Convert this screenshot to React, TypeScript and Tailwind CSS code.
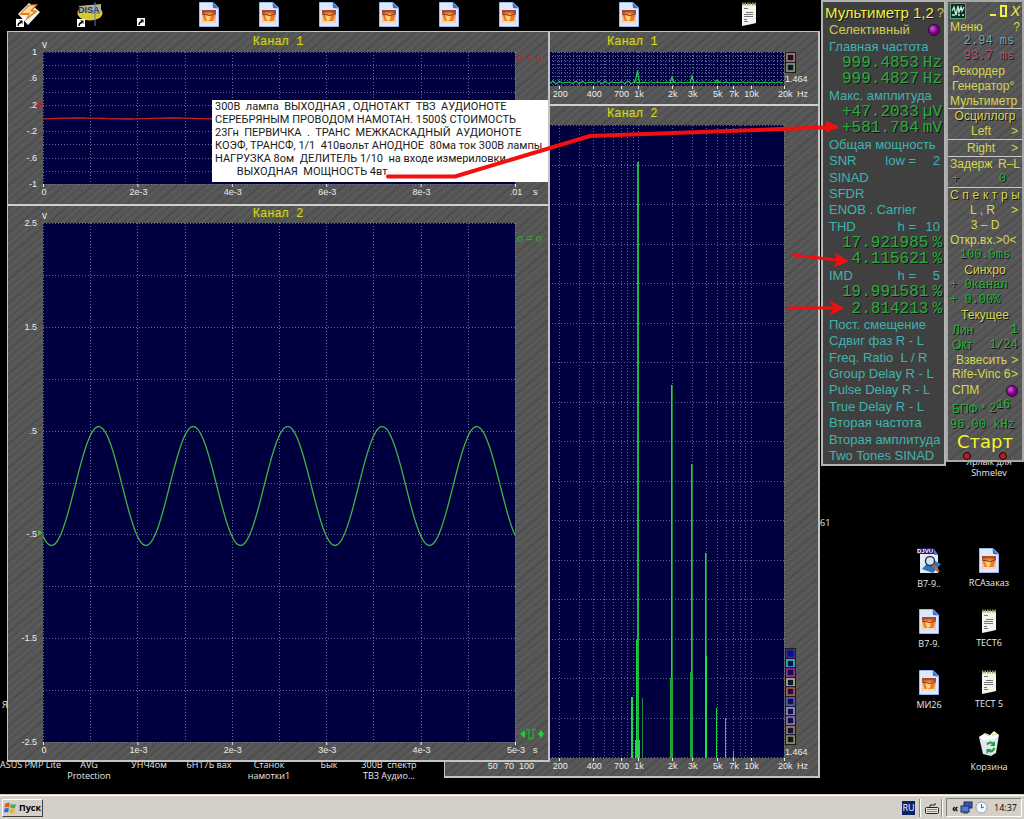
import React from "react";

const SANS = "font-['Liberation_Sans',Arial,sans-serif]";
const HATCH =
  "bg-[#565656] bg-[repeating-linear-gradient(140deg,#5c5c5c_0px,#575757_2px,#4f4f4f_4px,#5a5a5a_5px,#555555_9px,#4a4a4a_10px,#595959_12px,#565656_15px,#4e4e4e_16px,#5b5b5b_18px)]";

/* ---------- helpers for drawing plots ---------- */

const range = (n: number) => Array.from({ length: n }, (_, i) => i);

function PlotTitle({ children }: { children: string }) {
  return (
    <span className="block font-['Liberation_Mono','Courier_New',monospace] text-[12px] leading-4 text-[#d8d820] [text-shadow:1px_0_0_#77771a]">
      {children}
    </span>
  );
}

type ScopeProps = {
  height: number;
  bottom: number;
  yLabels: string[];
  xLabels: string[];
  trace: string;
  traceColor: string;
  markerY: number;
  children?: React.ReactNode;
};

function ScopePlot({ height, bottom, yLabels, xLabels, trace, traceColor, markerY, children }: ScopeProps) {
  const top = bottom - height;
  const left = 35;
  const w = 472;
  const stepY = height / 10;
  const stepX = w / 10;
  return (
    <svg
      className={`block ${SANS}`}
      width="540"
      height={bottom + 18}
      viewBox={`0 0 540 ${bottom + 18}`}
      fontSize="9"
      fill="#ececec"
    >
      <rect x={left} y={top} width={w} height={height} fill="#000040" />
      <g stroke="#7d84a8" strokeWidth="1" strokeDasharray="1 2" opacity="0.8" shapeRendering="crispEdges">
        {range(11).map((i) => (
          <line key={"h" + i} x1={left} x2={left + w} y1={Math.round(top + i * stepY) + 0.5} y2={Math.round(top + i * stepY) + 0.5} />
        ))}
        {range(11).map((i) => (
          <line key={"v" + i} y1={top} y2={bottom} x1={Math.round(left + i * stepX) + 0.5} x2={Math.round(left + i * stepX) + 0.5} />
        ))}
      </g>
      <path d={trace} fill="none" stroke={traceColor} strokeWidth="1.3" />
      <text x="34" y={top - 4} fontSize="10">v</text>
      {yLabels.map((t, i) => (
        <text key={t} x="29" y={top + (i * height) / 5 + 3} textAnchor="end">
          {t}
        </text>
      ))}
      {xLabels.map((t, i) => (
        <g key={t}>
          <rect x={left + (i * w) / 5} y={bottom} width="1" height="3" />
          <text x={left + 1 + (i * w) / 5} y={bottom + 11} textAnchor="middle">
            {t}
          </text>
        </g>
      ))}
      <text x="525" y={bottom + 11}>s</text>
      <path d={`M30 ${markerY - 3}l5 3l-5 3z`} fill={traceColor} />
      {children}
    </svg>
  );
}

const sine = (() => {
  let d = "";
  for (let x = 35; x <= 507; x += 2) {
    const y = 280 - 59.5 * Math.cos((2 * Math.PI * (x - 90.7)) / 94.5);
    d += (d ? "L" : "M") + x + " " + y.toFixed(1);
  }
  return d;
})();

const flat = (() => {
  let d = "";
  for (let x = 35; x <= 507; x += 4) {
    const y = 86.5 + 0.5 * Math.sin(x / 15);
    d += (d ? "L" : "M") + x + " " + y.toFixed(1);
  }
  return d;
})();

/* ---------- spectrum ---------- */

const fx = (f: number) => 193 + 112.5 * Math.log10(f / 1000);
const FREQ_LINES = [
  50, 60, 70, 80, 90, 100, 200, 300, 400, 500, 600, 700, 800, 900, 1000, 2000, 3000, 4000, 5000, 6000, 7000, 8000,
  9000, 10000, 20000,
];
const FREQ_LABELS: [number, string][] = [
  [50, "50"],
  [70, "70"],
  [100, "100"],
  [200, "200"],
  [400, "400"],
  [700, "700"],
  [1000, "1k"],
  [2000, "2k"],
  [3000, "3k"],
  [5000, "5k"],
  [7000, "7k"],
  [10000, "10k"],
  [20000, "20k"],
];

function FreqAxis({ y }: { y: number }) {
  return (
    <g>
      {FREQ_LABELS.map(([f, t]) => (
        <g key={t}>
          <rect x={Math.round(fx(f))} y={y} width="1" height="3" />
          <text x={fx(f) + 1} y={y + 11} textAnchor="middle">
            {t}
          </text>
        </g>
      ))}
      <text x="352" y={y + 11}>Hz</text>
    </g>
  );
}

const noise = (() => {
  let d = "M0 31";
  for (let x = 2; x <= 339; x += 2) {
    const amp = x < 200 ? 1.6 : 0.7;
    const y = 30.5 + amp * Math.sin(x * 1.7) * Math.cos(x * 0.61);
    d += "L" + x + " " + y.toFixed(1);
  }
  return d;
})();

function Swatch({ y, c, fill }: { y: number; c: string; fill?: string }) {
  return (
    <g>
      <rect x="340.5" y={y - 0.5} width="10" height="10" fill="none" stroke="#1c1c1c" />
      <rect x="342" y={y + 1} width="7" height="7" fill={fill || "#10104a"} stroke={c} strokeWidth="1.4" />
    </g>
  );
}

const SWATCHES = ["#2020b0", "#35c8d8", "#b020b0", "#c8c860", "#c86040", "#5060d8", "#a0a0e0", "#a878d0", "#b09050", "#a0a048"];

function SpectrumWindow() {
  return (
    <section
      aria-label="Spectrum"
      className={`absolute left-[444px] top-[31px] w-[376px] border border-b-2 border-r-2 border-[#c4c4c4] ${HATCH}`}
    >
      <div className="border-b-2 border-[#d0d0d0]">
        <div className="h-5 pl-[162px] pt-0.5">
          <PlotTitle>Канал 1</PlotTitle>
        </div>
        <svg className={`block ${SANS}`} width="373" height="52" viewBox="0 0 373 52" fontSize="9" fill="#ececec">
          <rect x="8" y="0" width="331" height="34" fill="#000040" />
          <g stroke="#8890c0" strokeDasharray="1 2" opacity="0.65" shapeRendering="crispEdges">
            {range(9).map((i) => (
              <line key={i} x1="8" x2="339" y1={i * 4 + 0.5} y2={i * 4 + 0.5} />
            ))}
            {range(60).map((i) => (
              <line key={"a" + i} x1={104.5 + i * 4} x2={104.5 + i * 4} y1="0" y2="34" />
            ))}
            {FREQ_LINES.map((f) => (
              <line key={"v" + f} x1={Math.round(fx(f)) + 0.5} x2={Math.round(fx(f)) + 0.5} y1="0" y2="34" />
            ))}
          </g>
          <path d={noise} fill="none" stroke="#22c04a" strokeWidth="1.2" />
          <path
            d="M189 31L191 26L192.500 19L194 28L195 31M225 31L227 25L229 31M245 31L247 24L249 31M270 30L272 28L274 30"
            fill="none"
            stroke="#22d050"
            strokeWidth="1.2"
          />
          <FreqAxis y={34} />
          <Swatch y={1} c="#c08060" />
          <Swatch y={11} c="#90a860" />
          <text x="340" y="30">1.464</text>
        </svg>
      </div>
      <div>
        <div className="h-[19px] pl-[162px]">
          <PlotTitle>Канал 2</PlotTitle>
        </div>
        <svg className={`block ${SANS}`} width="373" height="651" viewBox="0 0 373 651" fontSize="9" fill="#ececec">
          <rect x="8" y="0" width="331" height="633" fill="#000040" />
          <g stroke="#7d84a8" strokeDasharray="1 2" opacity="0.75" shapeRendering="crispEdges">
            {range(17).map((i) => (
              <line key={i} x1="8" x2="339" y1={Math.round(i * 39.5) + 0.5} y2={Math.round(i * 39.5) + 0.5} />
            ))}
            {FREQ_LINES.map((f) => (
              <line key={"v" + f} x1={Math.round(fx(f)) + 0.5} x2={Math.round(fx(f)) + 0.5} y1="0" y2="633" />
            ))}
          </g>
          <g fill="#22d444" shapeRendering="crispEdges">
            <rect x="192" y="37" width="2" height="596" fill="#1cb844" />
            <rect x="191" y="515" width="1" height="118" />
            <rect x="186" y="572" width="2" height="61" />
            <rect x="197" y="573" width="1" height="60" fill="#168a3a" />
            <rect x="190" y="615" width="5" height="18" />
            <rect x="226" y="260" width="1" height="373" />
            <rect x="227" y="260" width="1" height="373" fill="#128a38" />
            <rect x="225" y="553" width="3" height="80" fill="#18a83a" />
            <rect x="246" y="339" width="1" height="294" />
            <rect x="247" y="339" width="1" height="294" fill="#128a38" />
            <rect x="245" y="547" width="3" height="86" fill="#18a83a" />
            <rect x="260" y="428" width="1" height="205" />
            <rect x="261" y="428" width="1" height="205" fill="#128a38" />
            <rect x="260" y="531" width="2" height="102" fill="#10e838" />
            <rect x="271" y="583" width="1" height="50" />
            <rect x="280" y="593" width="1" height="40" />
            <rect x="288" y="626" width="1" height="7" />
          </g>
          <FreqAxis y={633} />
          {SWATCHES.map((c, i) => (
            <Swatch key={c} y={524 + Math.round(i * 9.6)} c={c} fill={i === 0 ? "#101080" : undefined} />
          ))}
          <text x="340" y="630">1.464</text>
        </svg>
      </div>
    </section>
  );
}

function ScopeWindow() {
  return (
    <section
      aria-label="Oscilloscope"
      className={`absolute left-[7px] top-[31px] w-[543px] border border-b-2 border-r-2 border-[#c4c4c4] ${HATCH}`}
    >
      <div className="relative h-[172px]">
        <div className="absolute inset-x-0 top-0.5 text-center">
          <PlotTitle>Канал 1</PlotTitle>
        </div>
        <ScopePlot
          height={132}
          bottom={152}
          yLabels={["1", ".6", ".2", "-.2", "-.6", "-1"]}
          xLabels={["0", "2e-3", "4e-3", "6e-3", "8e-3", ".01"]}
          trace={flat}
          traceColor="#d01828"
          markerY={73}
        >
          <text x="509" y="29" fontSize="11" fill="#b82828">o &lt; o</text>
        </ScopePlot>
      </div>
      <div className="relative border-t-2 border-[#d0d0d0]">
        <div className="absolute inset-x-0 top-0 text-center">
          <PlotTitle>Канал 2</PlotTitle>
        </div>
        <ScopePlot
          height={519}
          bottom={536}
          yLabels={["2.5", "1.5", ".5", "-.5", "-1.5", "-2.5"]}
          xLabels={["0", "1e-3", "2e-3", "3e-3", "4e-3", "5e-3"]}
          trace={sine}
          traceColor="#3fb53f"
          markerY={327}
        >
          <text x="509" y="36" fontSize="11" fill="#28b028">o = o</text>
          <g fill="#20d030">
            <path d="M512 528l5-4v8z" />
            <path d="M533 524l3 4l-3 4l-3-4z" />
            <path d="M518 523.500h3v9h4v-9h3" fill="none" stroke="#20b030" strokeWidth="1.3" />
          </g>
        </ScopePlot>
      </div>
    </section>
  );
}

/* ---------- multimeter ---------- */

const SHADOW = "[text-shadow:1px_1px_0_#151515]";
const MONO = "font-['Liberation_Mono','Courier_New',monospace]";

function Item({ children }: { children: React.ReactNode }) {
  return (
    <button type="button" className="flex w-full flex-1 items-center whitespace-pre pl-1.5 text-left text-[13px] leading-4 text-[#3fb4ae]">
      {children}
    </button>
  );
}

function Value({ n, unit }: { n: string; unit: string }) {
  return (
    <div className={`flex flex-1 items-center justify-end gap-1 pr-0.5 text-[16px] leading-4 text-[#2cab3c] ${MONO}`}>
      <span>{n}</span>
      <span>{unit}</span>
    </div>
  );
}

function Param({ name, label, value }: { name: string; label: string; value: string }) {
  return (
    <Item>
      <span className="flex-1">{name}</span>
      <span>{label}</span>
      <span className="w-7 pr-1 text-right">{value}</span>
    </Item>
  );
}

function Led() {
  return <span className="size-3 shrink-0 rounded-full border border-[#2a0830] bg-[radial-gradient(circle_at_35%_35%,#d060d8,#800088_50%,#500058)]" />;
}

function Multimeter() {
  return (
    <section
      aria-label="Мультиметр"
      className={`flex h-[466px] w-[125px] flex-col border-2 border-[#b4b4b4] bg-[#404040] ${SANS} ${SHADOW}`}
    >
      <h1 className="flex h-5 items-end justify-between whitespace-nowrap pl-0.5 text-[15px] leading-[18px] text-[#f0f040]">
        Мультиметр 1,2<button type="button" className="text-[13px] text-[#c8c860]">?</button>
      </h1>
      <button type="button" className="flex flex-1 items-center justify-between pl-1.5 pr-1 text-[13px] leading-4 text-[#cccc58]">
        Селективный <Led />
      </button>
      <Item>Главная частота</Item>
      <Value n="999.4853" unit="Hz" />
      <Value n="999.4827" unit="Hz" />
      <Item>Макс. амплитуда</Item>
      <Value n="+47.2033" unit="µV" />
      <Value n="+581.784" unit="mV" />
      <Item>Общая мощность</Item>
      <Param name="SNR" label="low =" value="2" />
      <Item>SINAD</Item>
      <Item>SFDR</Item>
      <Item>ENOB . Carrier</Item>
      <Param name="THD" label="h =" value="10" />
      <Value n="17.921985" unit="%" />
      <Value n="4.115621" unit="%" />
      <Param name="IMD" label="h =" value="5" />
      <Value n="19.991581" unit="%" />
      <Value n="2.814213" unit="%" />
      <Item>Пост. смещение</Item>
      <Item>Сдвиг фаз R - L</Item>
      <Item>{"Freq. Ratio  L / R"}</Item>
      <Item>Group Delay R - L</Item>
      <Item>Pulse Delay R - L</Item>
      <Item>True Delay R - L</Item>
      <Item>Вторая частота</Item>
      <Item>Вторая амплитуда</Item>
      <Item>Two Tones SINAD</Item>
    </section>
  );
}

/* ---------- control panel ---------- */

const ROW = "flex h-[15px] w-full items-center whitespace-pre px-1 text-[12px] leading-[15px]";
const YEL = "text-[#d6d650]";
const GRN = "text-[#22b03a]";
const LINE = "border-b border-[#c8c8c8]";

function ControlPanel() {
  return (
    <section
      aria-label="Панель управления"
      className={`flex h-[462px] w-[78px] flex-col border-2 border-[#a8a8a8] ${HATCH} ${SANS} ${SHADOW}`}
    >
      <header className="flex h-[18px] items-center pl-0.5">
        <svg width="16" height="16" viewBox="0 0 16 16" aria-hidden="true">
          <rect x="0.5" y="0.5" width="15" height="15" fill="#0c3020" stroke="#58a078" />
          <path d="M2 8l2-4l2 8l2-9l1 6l2-5l1 4l2-4M2 12h3m3 0h2m2 0h2" fill="none" stroke="#c8f0d8" strokeWidth="1.3" />
        </svg>
        <div className={`ml-auto flex items-center gap-1 pr-0.5 ${YEL}`}>
          <button type="button" aria-label="Свернуть" className="h-2.5 w-1.5 border-b-2 border-[#f0f040]" />
          <button type="button" aria-label="Развернуть" className="h-3 w-[7px] border-2 border-[#f0f040]" />
          <button type="button" aria-label="Закрыть" className="text-[14px] italic leading-[14px] text-[#f0f040]">
            X
          </button>
        </div>
      </header>
      <div className={`${ROW} -mb-px justify-between ${YEL} !px-0.5`}>
        <button type="button">Меню</button>
        <button type="button">?</button>
      </div>
      <div className={`${ROW} ${MONO} justify-center pl-3 text-[#68a8b8]`}>2.94 ms</div>
      <div className={`${ROW} ${MONO} justify-center pl-3 text-[#b85868]`}>93.7 ms</div>
      <button type="button" className={`${ROW} ${YEL}`}>Рекордер</button>
      <button type="button" className={`${ROW} ${YEL}`}>Генератор°</button>
      <button type="button" className={`${ROW} ${YEL} ${LINE} !px-0.5`}>Мультиметр</button>
      <div className={`${ROW} ${YEL} justify-center`}>Осциллогр</div>
      <button type="button" className={`${ROW} ${YEL} ${LINE} !h-4 justify-end gap-5`}>
        <span>Left</span>
        <span>&gt;</span>
      </button>
      <button type="button" className={`${ROW} ${YEL} ${LINE} !h-[17px] justify-end gap-4`}>
        <span>Right</span>
        <span>&gt;</span>
      </button>
      <button type="button" className={`${ROW} ${YEL} justify-between !px-0.5`}>
        <span>Задерж</span>
        <span>R–L</span>
      </button>
      <div className={`${ROW} ${GRN} ${LINE} !h-4 ${MONO} justify-between !pr-4`}>
        <span>+</span>
        <span>0</span>
      </div>
      <div className={`${ROW} ${YEL} justify-between !px-0.5`}>
        {"Спектры".split("").map((c, i) => (
          <span key={i}>{c}</span>
        ))}
      </div>
      <button type="button" className={`${ROW} ${YEL} justify-end gap-4`}>
        <span>L , R</span>
        <span>&gt;</span>
      </button>
      <button type="button" className={`${ROW} ${YEL} justify-center`}>3 – D</button>
      <button type="button" className={`${ROW} ${YEL} !px-0.5`}>{"Откр.вх.>0<"}</button>
      <div className={`${ROW} ${GRN} ${MONO} justify-center`}>100.0ms</div>
      <div className={`${ROW} ${YEL} justify-center`}>Синхро</div>
      <div className={`${ROW} ${GRN} ${MONO} !px-0.5`}>+ 0канал</div>
      <div className={`${ROW} ${GRN} ${MONO} !px-0.5`}>+ 0.00%</div>
      <div className={`${ROW} ${YEL} justify-center`}>Текущее</div>
      <div className={`${ROW} ${GRN} justify-between`}>
        <span>Лин</span>
        <span className={MONO}>1</span>
      </div>
      <div className={`${ROW} ${GRN} justify-between`}>
        <span>Окт</span>
        <span className={MONO}>1/24</span>
      </div>
      <button type="button" className={`${ROW} ${YEL} justify-end gap-1`}>
        <span>Взвесить</span>
        <span>&gt;</span>
      </button>
      <button type="button" className={`${ROW} ${YEL} -mt-px justify-between`}>
        <span>Rife-Vinc 6</span>
        <span>&gt;</span>
      </button>
      <button type="button" className={`${ROW} ${YEL} !h-[17px] justify-between`}>
        СПМ <Led />
      </button>
      <div className={`${ROW} ${GRN} !h-[18px]`}>
        <span className="self-end">БПФ * </span>
        <span className={`self-end ${MONO}`}>2</span>
        <span className={`self-start leading-3 ${MONO}`}>16</span>
      </div>
      <div className={`${ROW} ${GRN} ${MONO} !h-4 !px-0.5`}>96.00 kHz</div>
      <button type="button" className="h-[18px] text-center font-['DejaVu_Sans',sans-serif] text-[18px] leading-[18px] text-[#f4f430]">
        Старт
      </button>
      <div className="flex flex-1 items-center justify-center gap-7">
        <span className="size-2 rounded-full border border-[#200] bg-[#b02020]" />
        <span className="size-2 rounded-full border border-[#200] bg-[#b02020]" />
      </div>
    </section>
  );
}

/* ---------- desktop icons ---------- */

function ImageFile() {
  return (
    <svg width="20" height="25" viewBox="0 0 20 25" aria-hidden="true">
      <path d="M0.500 0.500H14L19.500 6V24.500H0.500z" fill="#dce8fb" stroke="#9db8ec" />
      <path d="M13.500 0.500L19.500 6.500L14 6z" fill="#3a72d8" />
      <path d="M3 8h14v13H3z" fill="#f6c49a" />
      <path d="M3 8h14v3H3z" fill="#a84c30" />
      <path d="M3 11.500q6-3 14 0l-3 8.500H6z" fill="#ec7a2c" />
      <path d="M6 13l6-1-1 6-3 1z" fill="#ffd27a" />
      <path d="M3 12l8 1.500 6-2" stroke="#8a3018" fill="none" />
      <path d="M4 19h12v2H4z" fill="#f2d8c0" />
    </svg>
  );
}

function TextFile() {
  return (
    <svg width="16" height="24" viewBox="0 0 16 24" aria-hidden="true">
      <path d="M1 2H15V21L11 22L1 24z" fill="#f4f4ee" />
      <path d="M1 2h14" stroke="#a89858" strokeWidth="3" strokeDasharray="1.500 1" />
      <path d="M3 6.500h4M3 12.500h9M3 14.500h9M5 10.500h7M3 19.500h4M3 17.500h3" stroke="#777" />
    </svg>
  );
}

function DjvuFile() {
  return (
    <svg width="24" height="26" viewBox="0 0 24 26" aria-hidden="true">
      <path d="M3 2H17L21 7V25H3z" fill="#dfeafa" />
      <path d="M17 1l4 6h-4z" fill="#4a7fdc" />
      <rect x="0" y="0" width="17" height="6" fill="#18186a" />
      <text x="0" y="5" fontSize="6" fontWeight="bold" fill="#fff" fontFamily="Liberation Sans">DJVU</text>
      <path d="M5 21l9-10 10 5-8 9z" fill="#2f74b8" />
      <circle cx="13" cy="13" r="4.500" fill="#cfe6f6" stroke="#334" strokeWidth="1.500" />
      <path d="M16 17l6 7" stroke="#c06030" strokeWidth="2.500" />
    </svg>
  );
}

function Bin() {
  return (
    <svg width="24" height="26" viewBox="0 0 24 26" aria-hidden="true">
      <path d="M2 6L22 4L19 22L14 25L6 23z" fill="#dfe8ee" />
      <path d="M2 6L8 2L13 4L17 0L22 4L18 8L6 9z" fill="#fff" />
      <path d="M8 3l5 2M15 4l5-1" stroke="#d8c860" />
      <path d="M10 13.500q3-3.500 6-1M17.500 17q-2 4.500-6 3" fill="none" stroke="#20a038" strokeWidth="2" />
      <path d="M18 10v5h-5zM9.500 23v-5h5z" fill="#20a038" />
    </svg>
  );
}

function ShortcutMark() {
  return (
    <>
      <rect width="8" height="8" fill="#fff" />
      <path d="M2 7Q2 4 5 3.500" stroke="#000" fill="none" strokeWidth="1.300" />
      <path d="M3 1.500H6.500V5z" fill="#000" />
    </>
  );
}

function Shortcut() {
  return (
    <svg width="8" height="8" viewBox="0 0 8 8" aria-hidden="true">
      <ShortcutMark />
    </svg>
  );
}

function Winamp() {
  return (
    <svg width="24" height="26" viewBox="0 0 24 26" aria-hidden="true">
      <path d="M2 13L13 2L24 11L12 24z" fill="#f4f4f4" />
      <path d="M3 14L12 4L22 3L17 9L22 10L9 20L12 14z" fill="#e08020" />
      <path d="M6 12L13 5L19 4L14 10L18 11L12 16L14 12z" fill="#ffd890" />
      <g transform="translate(0 18)">
        <ShortcutMark />
      </g>
    </svg>
  );
}

function Disa() {
  return (
    <svg width="26" height="26" viewBox="0 0 26 26" aria-hidden="true">
      <ellipse cx="13" cy="12" rx="12.500" ry="7.500" fill="#d8c830" />
      <path d="M2 5L24 3V11H2z" fill="#b0b098" />
      <text x="1" y="12" fontSize="9" fontWeight="bold" fontFamily="Liberation Sans" fill="#2c3450">DISA</text>
      <path d="M18 1V25M15 12h8" stroke="#5878c8" />
      <g transform="translate(0 18)">
        <ShortcutMark />
      </g>
    </svg>
  );
}

const LABEL = "text-center font-['Open_Sans','Noto_Sans',sans-serif] text-[9px] leading-[11px] text-[#e8e8e8]";

function DeskIcon({ icon, label }: { icon?: React.ReactNode; label: string }) {
  return (
    <button type="button" className={`flex h-[61px] w-[60px] flex-col items-center gap-1 ${LABEL}`}>
      {icon}
      <span>{label}</span>
    </button>
  );
}

function Desktop() {
  return (
    <>
      <div className="flex h-[28px] items-center">
        <div className="flex w-[60px] justify-center pr-1"><Winamp /></div>
        <div className="flex w-[60px] justify-center"><Disa /></div>
        <div className="flex w-[58px] justify-center self-end pb-0.5 pr-4"><Shortcut /></div>
        {range(6).map((i) => (
          <div key={i} className="flex w-[60px] justify-center pl-0.5"><ImageFile /></div>
        ))}
        <div className="w-[60px]" />
        <div className="flex w-[60px] justify-center pl-0.5"><ImageFile /></div>
        <div className="w-[60px]" />
        <div className="flex w-[60px] justify-center pl-0.5"><TextFile /></div>
      </div>
      <div className={`absolute bottom-[14px] left-0 flex ${LABEL}`}>
        <span className="w-[59px] whitespace-nowrap">ASUS PMP Lite</span>
        <span className="w-[60px]">AVG<br />Protection</span>
        <span className="w-[60px]">УНЧ4ом</span>
        <span className="w-[60px]">6Н17Б вах</span>
        <span className="w-[60px]">Станок<br />намотки1</span>
        <span className="w-[60px]">Бык</span>
        <span className="w-[60px] whitespace-pre">{"300В  спектр"}<br />ТВЗ Аудио...</span>
      </div>
      <span className={`absolute left-[2px] top-[699px] ${LABEL}`}>Я</span>
      <span className={`absolute left-[820px] top-[517px] ${LABEL}`}>61</span>
      <div className={`absolute right-[5px] top-[456px] w-[60px] ${LABEL}`}>
        Ярлык для
        <br />
        Shmelev
      </div>
      <div className="absolute right-[5px] top-[548px] grid grid-cols-2">
        <DeskIcon icon={<DjvuFile />} label="В7-9.." />
        <DeskIcon icon={<ImageFile />} label="RCAзаказ" />
        <DeskIcon icon={<ImageFile />} label="В7-9." />
        <DeskIcon icon={<TextFile />} label="ТЕСТ6" />
        <DeskIcon icon={<ImageFile />} label="МИ26" />
        <DeskIcon icon={<TextFile />} label="ТЕСТ 5" />
        <span />
        <DeskIcon icon={<Bin />} label="Корзина" />
      </div>
    </>
  );
}

/* ---------- annotations ---------- */

function Annotation() {
  return (
    <>
      <div className="absolute left-[212px] top-[100px] w-[336px] whitespace-pre bg-white pb-1 pl-[3px] font-['Roboto','Liberation_Sans',sans-serif] text-[11px] leading-[13px] text-[#1a1a1a]">
        <p>{"300В  лампа  ВЫХОДНАЯ , ОДНОТАКТ  ТВЗ  АУДИОНОТЕ"}</p>
        <p>{"СЕРЕБРЯНЫМ ПРОВОДОМ НАМОТАН. 1500$ СТОИМОСТЬ"}</p>
        <p>{"23Гн  ПЕРВИЧКА  .  ТРАНС  МЕЖКАСКАДНЫЙ  АУДИОНОТЕ"}</p>
        <p>{"КОЭФ, ТРАНСФ, 1/1  410вольт АНОДНОЕ  80ма ток 300В лампы"}</p>
        <p>{"НАГРУЗКА 8ом  ДЕЛИТЕЛЬ 1/10  на входе измериловки."}</p>
        <p>{"        ВЫХОДНАЯ  МОЩНОСТЬ 4вт"}</p>
      </div>
      <svg className="pointer-events-none absolute left-[380px] top-[110px]" width="480" height="215" viewBox="380 110 480 215" fill="none" stroke="#f01010" aria-hidden="true">
        <path d="M388 176.500H455L590 136L836 127" strokeWidth="4" strokeLinejoin="round" strokeLinecap="round" />
        <path d="M826 121L838 127L826 132z" fill="#f01010" strokeWidth="1" />
        <path d="M793 255L845 261M788 308H841" strokeWidth="3" strokeLinecap="round" />
        <path d="M835 253.500L848 261L834 267L838 260.500zM830 301L843 308L830 315L834 308z" fill="#f01010" strokeWidth="1" />
      </svg>
    </>
  );
}

/* ---------- taskbar ---------- */

function Taskbar() {
  return (
    <footer className="flex h-6 items-center border-t border-white bg-[#d4d0c8] font-['Open_Sans','Noto_Sans',sans-serif] text-[10px] leading-3 text-black shadow-[0_-1px_0_#d4d0c8]">
      <button
        type="button"
        className="ml-0.5 flex h-[18px] w-[41px] items-center gap-0.5 border border-b-[#404040] border-l-white border-r-[#404040] border-t-white pl-px text-[9px] font-bold"
      >
        <svg className="shrink-0" width="13" height="12" viewBox="0 0 13 12" aria-hidden="true">
          <path d="M1 2Q4 0 6 1.500L5 5.500Q3 4.500 0.500 5.500z" fill="#e05a28" />
          <path d="M7 2Q9 3 12 2L11 6Q8.500 7 6 5.500z" fill="#58a838" />
          <path d="M0.500 6.500Q3 5.500 5 6.500L4 10.500Q2 9.500 0 10.500z" fill="#3868c8" />
          <path d="M6 7Q8 8 11 7L10 11Q7.500 12 5 10.500z" fill="#e8b820" />
        </svg>
        Пуск
      </button>
      <div className="ml-auto flex h-full items-center py-px">
        <button type="button" className="h-3.5 w-[13px] bg-[#0a246a] text-center text-[9px] text-white">RU</button>
        <div className="ml-1 h-[18px] border-l border-r border-l-[#888] border-r-white" />
        <svg className="ml-1" width="14" height="12" viewBox="0 0 14 12" aria-hidden="true">
          <path d="M5 5V3H10V1" fill="none" stroke="#222" />
          <rect x="0.500" y="5.500" width="13" height="6" rx="1" fill="#e8e8e0" stroke="#222" />
          <path d="M2.500 7.500h9M2.500 9.500h9" stroke="#222" strokeDasharray="1 1" />
        </svg>
        <div className="ml-0.5 h-[18px] border-l border-r border-l-[#888] border-r-white" />
        <div className="ml-[3px] mr-0.5 flex h-[19px] w-[76px] items-center gap-0.5 border border-b-white border-l-[#808080] border-r-white border-t-[#808080] pl-[5px]">
          <button type="button" aria-label="Показать скрытые значки" className="text-[10px] font-bold leading-3">«</button>
          <svg width="13" height="13" viewBox="0 0 13 13" aria-hidden="true">
            <rect x="4" y="1" width="8" height="6" fill="#3858b8" stroke="#182858" />
            <rect x="1" y="5" width="8" height="6" fill="#5878d8" stroke="#182858" />
            <path d="M3 12h5" stroke="#182858" />
          </svg>
          <svg width="13" height="13" viewBox="0 0 13 13" aria-hidden="true">
            <circle cx="6.500" cy="6.500" r="5.500" fill="#f0f8fc" stroke="#90a0b0" />
            <path d="M6.500 3V7L9 6" fill="none" stroke="#3070b0" />
          </svg>
          <time className="ml-auto pr-1 text-[9px]">14:37</time>
        </div>
      </div>
    </footer>
  );
}

export default function App() {
  return (
    <div className="flex min-h-screen flex-col overflow-hidden bg-black">
      <main className="relative min-h-[790px] flex-1">
        <Desktop />
        <SpectrumWindow />
        <ScopeWindow />
        <div className="absolute right-0 top-0 flex items-start">
          <Multimeter />
          <ControlPanel />
        </div>
        <Annotation />
      </main>
      <Taskbar />
    </div>
  );
}
